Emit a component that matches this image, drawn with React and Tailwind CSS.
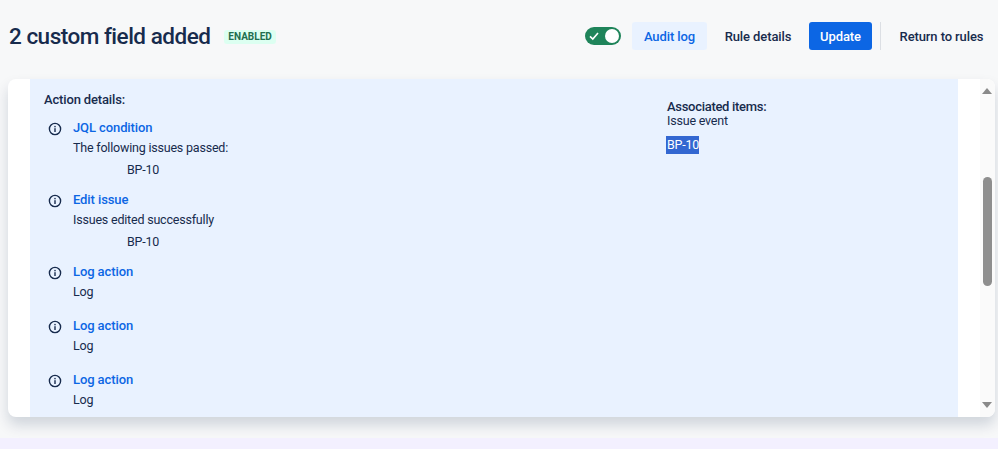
import React from 'react';

const InfoIcon = () => (
  <svg width="14" height="14" viewBox="0 0 14 14" fill="none" className="shrink-0">
    <circle cx="7" cy="7" r="5.6" stroke="#172b4d" strokeWidth="1.4" />
    <rect x="6.3" y="6.2" width="1.4" height="3.8" fill="#172b4d" />
    <rect x="6.3" y="3.9" width="1.4" height="1.4" fill="#172b4d" />
  </svg>
);

const ActionItem = ({ title, text, issue, className }) => (
  <div className={`flex ${className}`}>
    <div className="w-[29px] pl-[4px] pt-[4px]">
      <InfoIcon />
    </div>
    <div>
      <a className="block h-[20px] text-[13px] tracking-[-0.1px] leading-[20px] text-[#0c66e4] font-medium">{title}</a>
      <p className="h-[20px] leading-[20px]">{text}</p>
      {issue && <p className="h-[20px] mt-[2px] pl-[54px] leading-[20px]">{issue}</p>}
    </div>
  </div>
);

const App = () => {
  return (
    <div className="relative h-[449px] w-[998px] overflow-hidden bg-[#f7f8f9] text-[12.5px] tracking-[-0.2px] text-[#172b4d] font-['Roboto','Noto_Sans',sans-serif]">
      {/* Header */}
      <div className="flex h-[79px] items-start justify-between pl-[9px] pr-[14px] pt-[22px]">
        <div className="flex h-[28px] items-center">
          <h1 className="text-[22.5px] tracking-[-0.5px] font-medium leading-[28px] text-[#172b4d]">2 custom field added</h1>
          <span className="ml-[14px] mt-[1px] rounded-[3px] bg-[#dcfff1] px-[4px] text-[10px] tracking-normal font-bold leading-[14px] text-[#216e4e]">
            ENABLED
          </span>
        </div>
        <div className="flex h-[28px] items-center text-[13px] tracking-[-0.1px]">
          <div className="relative mr-[11px] h-[18px] w-[36px] rounded-full bg-[#1f845a]">
            <svg width="12" height="12" viewBox="0 0 12 12" fill="none" className="absolute left-[3px] top-[3px]">
              <path d="M2 6.3 L4.8 9 L10 3" stroke="white" strokeWidth="1.6" />
            </svg>
            <span className="absolute right-[2px] top-[2px] h-[14px] w-[14px] rounded-full bg-white" />
          </div>
          <button className="h-[28px] w-[75px] rounded-[3px] bg-[#e9f2ff] pt-[1px] font-medium text-[#0c66e4]">Audit log</button>
          <button className="ml-[6px] h-[28px] w-[90px] pt-[1px] font-medium text-[#172b4d]">Rule details</button>
          <button className="ml-[6px] h-[28px] w-[63px] rounded-[3px] bg-[#0c66e4] pt-[1px] font-medium text-white">Update</button>
          <span className="ml-[8px] h-[28px] w-[1px] bg-[#dcdfe4]" />
          <button className="ml-[18px] h-[28px] w-[85px] whitespace-nowrap pt-[1px] font-medium text-[#172b4d]">Return to rules</button>
        </div>
      </div>

      {/* Card */}
      <div className="relative ml-[8px] flex h-[338px] w-[987px] overflow-hidden rounded-[8px] bg-white shadow-[0_8px_14px_rgba(9,30,66,0.16)]">
        <div className="ml-[22px] flex h-full w-[928px] bg-[#e9f2ff] pl-[14px] pt-[11px]">
          <div className="w-[622px]">
            <h3 className="h-[20px] text-[13px] tracking-[-0.15px] font-medium leading-[20px]">Action details:</h3>
            <ActionItem className="mt-[8px]" title="JQL condition" text="The following issues passed:" issue="BP-10" />
            <ActionItem className="mt-[10px]" title="Edit issue" text="Issues edited successfully" issue="BP-10" />
            <ActionItem className="mt-[10px]" title="Log action" text="Log" />
            <ActionItem className="mt-[14px]" title="Log action" text="Log" />
            <ActionItem className="mt-[14px]" title="Log action" text="Log" />
          </div>
          <div className="pt-[10px]">
            <h3 className="pl-[1px] text-[13px] tracking-[-0.3px] font-medium leading-[13px]">Associated items:</h3>
            <p className="pl-[1px] leading-[15px]">Issue event</p>
            <p className="mt-[8px] w-[33px] overflow-hidden whitespace-nowrap bg-[#3367d1] pl-[1px] leading-[18px] text-white">BP-10</p>
          </div>
        </div>

        {/* Scrollbar */}
        <div className="absolute bottom-0 right-0 top-0 w-[15px] bg-[#fafafa]">
          <svg width="10" height="6" viewBox="0 0 10 6" className="absolute left-[2px] top-[9px]">
            <path d="M5 0 L10 6 L0 6 Z" fill="#8a8a8a" />
          </svg>
          <div className="absolute left-[3px] top-[98px] h-[109px] w-[9px] rounded-full bg-[#8e8e8e]" />
          <svg width="10" height="6" viewBox="0 0 10 6" className="absolute bottom-[9px] left-[2px]">
            <path d="M0 0 L10 0 L5 6 Z" fill="#8a8a8a" />
          </svg>
        </div>
      </div>

      {/* Next panel */}
      <div className="absolute bottom-0 left-0 right-0 h-[11px] bg-[#f3f0ff]" />
    </div>
  );
};

export default App;
